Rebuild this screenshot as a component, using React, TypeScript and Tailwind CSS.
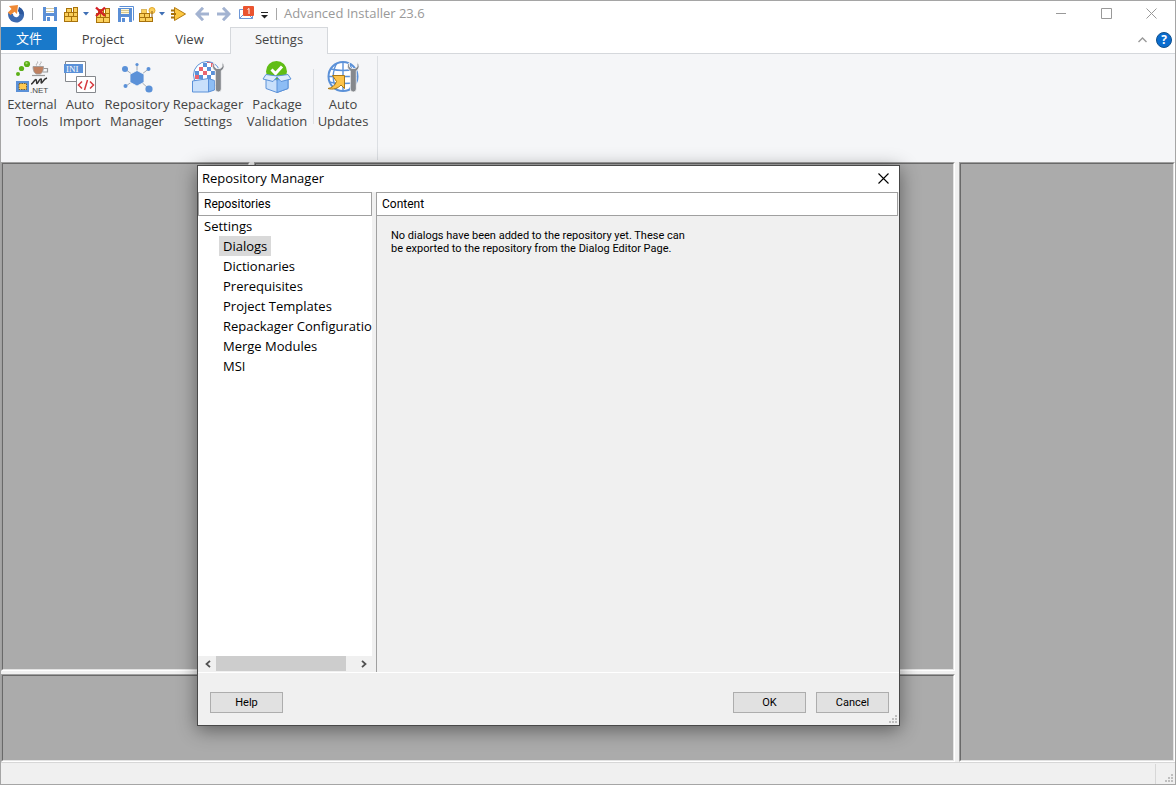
import type { ReactNode } from "react";

const uiFont = "font-['Open_Sans','Noto_Sans_CJK_SC',sans-serif]";

function Bricks({ x = 0, y = 0 }: { x?: number; y?: number }) {
  return (
    <g transform={`translate(${x} ${y})`} fill="#fbd05c" stroke="#a8720c" strokeWidth="1">
      <rect x="2.5" y="1.5" width="5" height="4" />
      <rect x="9.5" y="0.5" width="4" height="5" />
      <rect x="0.5" y="5.5" width="4" height="4" />
      <rect x="4.5" y="5.5" width="5" height="4" />
      <rect x="9.5" y="5.5" width="4" height="4" />
      <rect x="0.5" y="9.5" width="7" height="5" />
      <rect x="7.5" y="9.5" width="6" height="5" />
    </g>
  );
}

function AppLogo() {
  return (
    <svg width="18" height="18" viewBox="0 0 18 18">
      <path d="M12 2a8 8 0 1 1-10.6 5.2L6 9a3.2 3.2 0 1 0 6-1.500z" fill="#3c6ab0" />
      <path d="M12 2c3.500 1.500 5 4.500 4.600 7.500L12.300 9c.2-1.200-.4-2.200-1.500-2.800z" fill="#2c579c" />
      <path d="M2 1l9-1-1 9-2.500-2.200L3.600 10 .8 7.500 4.500 4z" fill="#f08a35" />
    </svg>
  );
}

function SaveIcon() {
  return (
    <svg width="16" height="16" viewBox="0 0 16 16">
      <path d="M1 1h14v14H1z" fill="#5b8fd6" />
      <path d="M4 1h8v6H4z" fill="#fff" />
      <path d="M4 2.500h8M4 5.500h8" stroke="#d3c9a4" />
      <path d="M4 10h8v5H4z" fill="#fff" />
      <path d="M5 11h3v4H5z" fill="#5b8fd6" />
    </svg>
  );
}

function BricksIcon() {
  return (
    <svg width="17" height="16" viewBox="0 0 17 16">
      <Bricks x={1} y={1} />
    </svg>
  );
}

function BricksDeleteIcon() {
  return (
    <svg width="18" height="17" viewBox="0 0 18 17">
      <Bricks x={2} y={2} />
      <path d="M2 1.500l9 8.500M11 1.500L2 10" stroke="#d51f26" strokeWidth="2.400" fill="none" />
    </svg>
  );
}

function SaveAllIcon() {
  return (
    <svg width="17" height="17" viewBox="0 0 17 17">
      <path d="M2.500.5h14v14" fill="none" stroke="#5b8fd6" />
      <path d="M1 2h14v14H1z" fill="#5b8fd6" />
      <path d="M4 3h8v5H4z" fill="#fff7d8" />
      <path d="M4 4.500h8M4 6.500h8" stroke="#d9c88c" />
      <path d="M4 11h8v5H4z" fill="#fff" />
      <path d="M5 12h3v4H5z" fill="#5b8fd6" />
    </svg>
  );
}

function BuildIcon() {
  return (
    <svg width="18" height="17" viewBox="0 0 18 17">
      <g fill="#fbd05c" stroke="#a8720c">
        <rect x="3.500" y="3.500" width="5" height="4" stroke="#dcb860" />
        <rect x="1.500" y="7.500" width="5" height="4" />
        <rect x="6.500" y="7.500" width="5" height="4" />
        <rect x="1.500" y="11.500" width="6" height="4" />
        <rect x="7.500" y="11.500" width="7" height="4" />
      </g>
      <circle cx="14" cy="4.500" r="3" fill="#fbd05c" stroke="#e3a82c" />
      <path d="M14 5v6" stroke="#8a5a10" />
    </svg>
  );
}

function RunIcon() {
  return (
    <svg width="17" height="16" viewBox="0 0 17 16">
      <path d="M4.500 1.500l11 6.500-11 6.500z" fill="#fcc843" stroke="#b47a10" />
      <path d="M1 4.500h4M1 8h5M1 11.500h4" stroke="#a8720c" strokeWidth="2" />
    </svg>
  );
}

function ArrowIcon({ flip }: { flip?: boolean }) {
  return (
    <svg width="14" height="14" viewBox="0 0 14 14" className={flip ? "rotate-180" : ""}>
      <path d="M8 .8L2 7l6 6.200M2.500 7H14" fill="none" stroke="#a3b3d1" strokeWidth="3" />
    </svg>
  );
}

function MailIcon() {
  return (
    <svg width="17" height="15" viewBox="0 0 17 15">
      <path d="M1.500 3.500h13v9h-13z" fill="#fff" stroke="#6e97d6" />
      <path d="M1.500 12.500l5-5M14.500 12.500l-4-4" stroke="#6e97d6" />
      <rect x="5" y="0" width="11" height="10" rx="1" fill="#ea5430" />
      <path d="M9.500 3.500l1.500-1v5.500" stroke="#fff" fill="none" />
    </svg>
  );
}

function Caret() {
  return (
    <svg width="7" height="4" viewBox="0 0 7 4">
      <path d="M0 0h6L3 3.500z" fill="#3f6fb5" />
    </svg>
  );
}

function Wrench() {
  return (
    <path
      d="M22.500 2.500a4.800 4.800 0 0 0 .8 8.300V29a3 3 0 0 0 6 0V10.800a4.800 4.800 0 0 0 .8-8.300v4.300l-2 1.700h-3.600l-2-1.700z"
      fill="#85888d"
      stroke="#f5f6f8"
      strokeWidth=".8"
    />
  );
}

function ExternalToolsIcon() {
  return (
    <svg width="34" height="34" viewBox="0 0 34 34">
      <circle cx="3" cy="14" r="2" fill="#5cb018" />
      <circle cx="6.500" cy="8.500" r="2.600" fill="#5cb018" />
      <circle cx="12" cy="4" r="3.100" fill="#5cb018" />
      <circle cx="11.500" cy="3.200" r="1.100" fill="#a6dd6e" />
      <path d="M18 6.500h10.500c0 4.500-1.500 7-3.500 7.500h-3.500c-2-.5-3.500-3-3.500-7.500z" fill="#bf8060" stroke="#999" strokeWidth=".8" />
      <path d="M28.500 8.500h4v3.500H28" fill="none" stroke="#999" strokeWidth="1.200" />
      <path d="M21.500 5.500c-1-2 2-2 1-4M25 5.500c-1-2 2-2 1-4" fill="none" stroke="#999" strokeWidth=".8" />
      <path d="M17 15.500h13" stroke="#999" strokeWidth="1.200" />
      <path d="M1 21h13v11H1z" fill="#5b91d8" />
      <path d="M4 23.500h7.500v6H4z" fill="#ffc94f" stroke="#78612d" strokeDasharray="1.500 1" />
      <path d="M16 24c2 0 3-4 5-4.500 1 0 0 4 1 4s2-4.500 4-4.500c1 0-.5 4 .5 4s2-4 5.500-5" fill="none" stroke="#333" strokeWidth="1.500" />
      <text x="15" y="32.500" fontSize="8" fill="#444" fontFamily="Liberation Sans, sans-serif">.NET</text>
    </svg>
  );
}

function AutoImportIcon() {
  return (
    <svg width="34" height="34" viewBox="0 0 34 34">
      <path d="M2.500 1.500h20v20h-20z" fill="#fff" stroke="#85888d" />
      <path d="M1 4h19v9H1z" fill="#5b91d8" />
      <text x="3" y="11.500" fontSize="9" fill="#fff" fontFamily="Liberation Serif, serif">INI</text>
      <path d="M13.500 16.500h19v16h-19z" fill="#fff" stroke="#85888d" />
      <path d="M19 21.500L15.500 25l3.500 3.500M27 21.500l3.500 3.500-3.500 3.500M24.500 20l-3 10" fill="none" stroke="#d6393f" strokeWidth="1.500" />
    </svg>
  );
}

function RepositoryIcon() {
  return (
    <svg width="34" height="34" viewBox="0 0 34 34">
      <path d="M17 18L5 9M17 18l0-14M17 18L28.500 9M17 18L6 26M17 18l12 11" stroke="#9aa0aa" strokeWidth=".9" />
      <path d="M17 10.500l7 3.800v8L17 26l-7-3.700v-8z" fill="#5b91d8" stroke="#f5f6f8" strokeWidth=".8" />
      <g fill="#5b91d8">
        <circle cx="5" cy="9" r="3" />
        <circle cx="17" cy="4.500" r="1.600" />
        <circle cx="28.500" cy="9" r="2" />
        <circle cx="5.500" cy="26" r="2" />
        <circle cx="29" cy="29" r="3.600" />
      </g>
    </svg>
  );
}

function RepackagerIcon() {
  return (
    <svg width="34" height="34" viewBox="0 0 34 34">
      <defs>
        <clipPath id="disc"><circle cx="16" cy="15" r="13.500" /></clipPath>
      </defs>
      <circle cx="16" cy="15" r="13.500" fill="#fff" />
      <g clipPath="url(#disc)">
        <path d="M12 3h4v4h-4zM4 11h4v4H4zM20 11h4v4h-4zM16 7h4v4h-4zM8 15h4v4H8zM16 15h4v4h-4z" fill="#5b91d8" />
        <path d="M8 7h4v4H8zM12 11h4v4h-4zM4 15h4v4H4zM16 -1h4v4h-4zM20 3h4v4h-4z" fill="#ea6570" />
      </g>
      <circle cx="16" cy="15" r="13.500" fill="none" stroke="#5b91d8" />
      <path d="M1.500 21l16-2.500V32h-16z" fill="#c9e0fb" stroke="#5b91d8" />
      <path d="M17.500 18.500l6 2v9.500l-6 2z" fill="#8dbdf5" stroke="#5b91d8" />
      <g transform="translate(1 0)"><Wrench /></g>
    </svg>
  );
}

function PackageIcon() {
  return (
    <svg width="34" height="34" viewBox="0 0 34 34">
      <circle cx="16.500" cy="11.500" r="10.500" fill="#60bd16" />
      <path d="M11.500 9.500l4 4 6.500-7" fill="none" stroke="#fff" strokeWidth="3" />
      <path d="M6 17l11 3 11-3v11.500L17 32.500 6 28.500z" fill="#c9e0fb" stroke="#5b91d8" />
      <path d="M17 20l11-3v11.500l-11 4z" fill="#8dbdf5" stroke="#5b91d8" />
      <path d="M6 14.500l11 1.500 11-1.500 3 4.500-10 2.500-4-4.500-4 4.500L3 19z" fill="#dcebfd" stroke="#5b91d8" />
    </svg>
  );
}

function UpdatesIcon() {
  return (
    <svg width="34" height="34" viewBox="0 0 34 34">
      <circle cx="17" cy="16.500" r="14.500" fill="#fff" stroke="#5b91d8" strokeWidth="2" />
      <path d="M17 2v29M5 9c8 2 16 2 24 0M3 22c9 2 19 2 28 0M3 16.500h28M11 3c-5 8-5 19 0 27M23 3c5 8 5 19 0 27" fill="none" stroke="#5b91d8" strokeWidth="1.400" />
      <path d="M6.500 15.500h12v13L15 25c-3 3.500-8 5-13 3.500 4-.5 7-3 8.500-7z" fill="#fcc34a" stroke="#a97818" />
      <g transform="translate(1 0)"><Wrench /></g>
    </svg>
  );
}

function RibbonButton({ icon, lines, width }: { icon: ReactNode; lines: [string, string]; width: string }) {
  return (
    <button className={`flex flex-col items-center whitespace-nowrap text-[13px] leading-[17px] text-[#444] ${width}`}>
      {icon}
      <span className="mt-[2px]">{lines[0]}</span>
      <span>{lines[1]}</span>
    </button>
  );
}

function Divider({ className }: { className: string }) {
  return <span className={`h-[12px] w-px bg-[#a8a8a8] ${className}`} />;
}

function TitleBar() {
  return (
    <header className="flex h-[26px] shrink-0 items-center pl-[6px]">
      <AppLogo />
      <Divider className="ml-[7px]" />
      <button aria-label="Save" className="ml-[9px]"><SaveIcon /></button>
      <button aria-label="New project" className="ml-[5px]"><BricksIcon /></button>
      <button aria-label="New project options" className="ml-[3px]"><Caret /></button>
      <button aria-label="Close project" className="ml-[4px]"><BricksDeleteIcon /></button>
      <button aria-label="Save all" className="ml-[5px]"><SaveAllIcon /></button>
      <button aria-label="Build" className="ml-[4px]"><BuildIcon /></button>
      <button aria-label="Build options" className="ml-[3px]"><Caret /></button>
      <button aria-label="Run" className="ml-[4px]"><RunIcon /></button>
      <button aria-label="Back" className="ml-[8px]"><ArrowIcon /></button>
      <button aria-label="Forward" className="ml-[8px]"><ArrowIcon flip /></button>
      <button aria-label="Notifications" className="ml-[7px] pb-[2px]"><MailIcon /></button>
      <button aria-label="Customize toolbar" className="ml-[6px] pt-[3px]">
        <svg width="8" height="7" viewBox="0 0 8 7">
          <path d="M0 .5h7" stroke="#222" />
          <path d="M0 3h7L3.500 6.500z" fill="#222" />
        </svg>
      </button>
      <Divider className="ml-[7px]" />
      <h1 className="ml-[7px] text-[13px] text-[#999]">Advanced Installer 23.6</h1>
      <div className="ml-auto flex pb-[2px]">
        <button aria-label="Minimize" className="flex w-[46px] items-center justify-center">
          <svg width="11" height="11" viewBox="0 0 11 11"><path d="M0 5.500h10" stroke="#999" /></svg>
        </button>
        <button aria-label="Maximize" className="flex w-[44px] items-center justify-center">
          <svg width="11" height="11" viewBox="0 0 11 11"><path d="M.5.5h10v10H.5z" stroke="#999" fill="none" /></svg>
        </button>
        <button aria-label="Close" className="flex w-[47px] items-center justify-center">
          <svg width="11" height="11" viewBox="0 0 11 11"><path d="M.5.5l10 10M10.500.5l-10 10" stroke="#999" fill="none" /></svg>
        </button>
      </div>
    </header>
  );
}

function TabBar() {
  return (
    <nav className="flex h-[27px] shrink-0 items-stretch border-b border-[#d5d8dc] text-[13px] text-[#444]">
      <button className="mb-[3px] w-[56px] bg-[#1979ca] text-white">文件</button>
      <button className="w-[92px]">Project</button>
      <button className="w-[81px]">View</button>
      <button className="-mb-px w-[98px] border border-b-0 border-[#d5d8dc] bg-[#f5f6f8] pb-[2px]">Settings</button>
      <div className="ml-auto flex items-center gap-[9px] pr-[3px]">
        <button aria-label="Collapse ribbon">
          <svg width="9" height="6" viewBox="0 0 9 6"><path d="M.5 5l4-4 4 4" fill="none" stroke="#999" strokeWidth="1.400" /></svg>
        </button>
        <button aria-label="Help" className="flex size-[16px] items-center justify-center rounded-full border border-[#10508c] bg-[#0a6cce] text-[12px] leading-none font-bold text-white">?</button>
      </div>
    </nav>
  );
}

function Ribbon() {
  return (
    <div className="flex h-[108px] shrink-0 bg-[#f5f6f8]">
      <div className="my-[2px] flex items-start border-r border-[#dcdfe3] pt-[4px] pr-[5px] pl-[7px]">
        <RibbonButton width="w-[48px]" icon={<ExternalToolsIcon />} lines={["External", "Tools"]} />
        <RibbonButton width="w-[48px]" icon={<AutoImportIcon />} lines={["Auto", "Import"]} />
        <RibbonButton width="w-[66px]" icon={<RepositoryIcon />} lines={["Repository", "Manager"]} />
        <RibbonButton width="w-[76px]" icon={<RepackagerIcon />} lines={["Repackager", "Settings"]} />
        <RibbonButton width="w-[62px]" icon={<PackageIcon />} lines={["Package", "Validation"]} />
        <span className="mt-[9px] ml-[5px] h-[55px] w-px bg-[#dcdfe3]" />
        <RibbonButton width="w-[58px]" icon={<UpdatesIcon />} lines={["Auto", "Updates"]} />
      </div>
    </div>
  );
}

function Pane({ className }: { className: string }) {
  return (
    <div className={`border border-t-[#a0a0a0] border-r-white border-b-white border-l-[#a0a0a0] ${className}`}>
      <div className="h-full border border-t-[#696969] border-r-[#e3e3e3] border-b-[#e3e3e3] border-l-[#696969] bg-[#ababab]" />
    </div>
  );
}

function Grip() {
  return (
    <svg width="8" height="8" viewBox="0 0 8 8" fill="#bfbfbf">
      <path d="M6 0h2v2H6zM3 3h2v2H3zM6 3h2v2H6zM0 6h2v2H0zM3 6h2v2H3zM6 6h2v2H6z" />
    </svg>
  );
}

const repositories = [
  "Dialogs",
  "Dictionaries",
  "Prerequisites",
  "Project Templates",
  "Repackager Configurations",
  "Merge Modules",
  "MSI",
];

const dialogFont = "font-['Roboto',sans-serif]";
const dialogButton = `h-[21px] w-[73px] border border-[#adadad] bg-[#e1e1e1] text-[11px] leading-none text-black ${dialogFont}`;

function RepositoryDialog() {
  return (
    <section
      role="dialog"
      aria-label="Repository Manager"
      className="absolute top-[164px] left-[196px] flex h-[561px] w-[703px] flex-col border border-[#484848] bg-[#f0f0f0] text-black shadow-[0_4px_18px_rgba(0,0,0,0.45)]"
    >
      <div className="flex h-[26px] shrink-0 items-center justify-between bg-white pr-[10px] pl-[4px]">
        <h2 className="text-[13px]">Repository Manager</h2>
        <button aria-label="Close dialog" className="pb-[2px]">
          <svg width="11" height="11" viewBox="0 0 11 11"><path d="M.5.5l10 10M10.500.5l-10 10" stroke="#000" strokeWidth="1.100" fill="none" /></svg>
        </button>
      </div>
      <div className="flex min-h-0 flex-1 gap-[4px] border-b border-white pr-px">
        <div className="flex w-[174px] shrink-0 flex-col bg-white">
          <h3 className={`flex h-[24px] shrink-0 items-center border border-[#a0a0a0] pl-[5px] text-[12px] ${dialogFont}`}>Repositories</h3>
          <div className="flex-1 overflow-hidden pl-[6px] text-[13px] leading-[20px] whitespace-nowrap">
            <p>Settings</p>
            <ul className="pl-[15px]">
              {repositories.map((name, i) => (
                <li key={name}>
                  <button className={i === 0 ? "block h-[20px] bg-[#d9d9d9] px-[4px]" : "block h-[20px] px-[4px]"}>{name}</button>
                </li>
              ))}
            </ul>
          </div>
          <div className="flex h-[16px] shrink-0 items-stretch border-b border-[#f0f0f0] bg-[#f0f0f0] pl-px">
            <button aria-label="Scroll left" className="flex w-[17px] items-center justify-center">
              <svg width="6" height="8" viewBox="0 0 6 8"><path d="M5 .8L1.500 4 5 7.200" fill="none" stroke="#505050" strokeWidth="1.800" /></svg>
            </button>
            <div className="flex-1"><div className="h-full w-[130px] bg-[#cdcdcd]" /></div>
            <button aria-label="Scroll right" className="flex w-[17px] items-center justify-center">
              <svg width="6" height="8" viewBox="0 0 6 8"><path d="M1 .8L4.500 4 1 7.200" fill="none" stroke="#505050" strokeWidth="1.800" /></svg>
            </button>
          </div>
        </div>
        <div className="flex flex-1 flex-col border-l border-[#a0a0a0]">
          <h3 className={`flex h-[24px] items-center border border-l-0 border-[#a0a0a0] bg-white pl-[5px] text-[12px] ${dialogFont}`}>Content</h3>
          <p className={`pt-[13px] pl-[14px] text-[11px] leading-[13px] ${dialogFont}`}>
            No dialogs have been added to the repository yet. These can
            <br />
            be exported to the repository from the Dialog Editor Page.
          </p>
        </div>
      </div>
      <footer className="flex h-[52px] shrink-0 items-start pt-[19px] pl-[12px]">
        <button className={dialogButton}>Help</button>
        <button className={`ml-auto ${dialogButton}`}>OK</button>
        <button className={`ml-[10px] ${dialogButton}`}>Cancel</button>
        <div className="mr-[2px] self-end pb-[2px]"><Grip /></div>
      </footer>
    </section>
  );
}

export default function App() {
  return (
    <div className={`relative flex h-screen min-h-[740px] flex-col overflow-hidden border border-[#a5a5a5] bg-white ${uiFont}`}>
      <TitleBar />
      <TabBar />
      <Ribbon />
      <main className="flex min-h-0 flex-1 gap-[4px] bg-[#f0f0f0]">
        <div className="flex flex-1 flex-col gap-[3px]">
          <div className="flex flex-1 gap-[4px]">
            <Pane className="w-[249px]" />
            <Pane className="flex-1" />
          </div>
          <Pane className="h-[88px]" />
        </div>
        <Pane className="w-[216px]" />
      </main>
      <footer className="flex h-[22px] shrink-0 justify-end border-t border-[#d7d7d7] bg-[#f0f0f0]">
        <div className="mt-px flex w-[20px] items-end justify-end border-l border-[#d7d7d7] pr-[2px] pb-[2px]"><Grip /></div>
      </footer>
      <RepositoryDialog />
    </div>
  );
}
